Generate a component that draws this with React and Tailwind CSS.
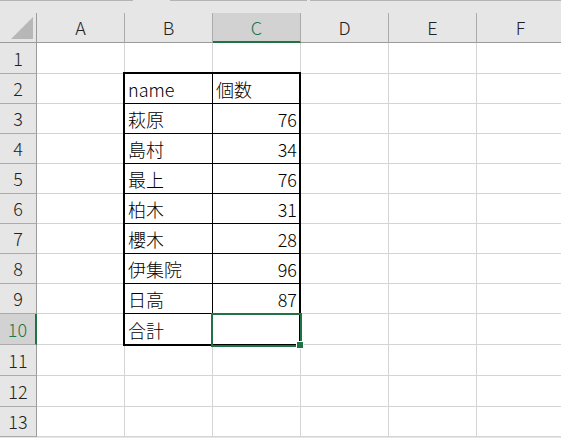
import React from 'react';

const COLS = ['A', 'B', 'C', 'D', 'E', 'F'];
const ROWS = [1, 2, 3, 4, 5, 6, 7, 8, 9, 10, 11, 12, 13];

const DATA = [
  ['name', '個数'],
  ['萩原', '76'],
  ['島村', '34'],
  ['最上', '76'],
  ['柏木', '31'],
  ['櫻木', '28'],
  ['伊集院', '96'],
  ['日高', '87'],
  ['合計', ''],
];

// B2:C10 is drawn by the table block, so the plain grid skips those cells
const inTable = (r, c) => r >= 2 && r <= 10 && (c === 2 || c === 3);

function SheetTable() {
  return (
    <div className="relative z-10 col-start-3 col-span-2 row-start-3 row-span-9 -ml-[2px] -mt-[2px] w-[178px] h-[274px] self-start justify-self-start border-2 border-black bg-white flex flex-col">
      {DATA.map(([name, count], i) => {
        const first = i === 0;
        const last = i === DATA.length - 1;
        return (
          <div key={i} className={`flex h-[30px] ${last ? '' : 'border-b border-black'}`}>
            <div className="w-[88px] border-r border-black flex items-center pl-[3px] pt-[2px] text-[18px] font-light text-black">
              {name}
            </div>
            <div
              className={`relative flex-1 flex items-center pt-[2px] text-[18px] font-light text-black ${
                first ? 'justify-start pl-[3px]' : 'justify-end pr-[2px]'
              }`}
            >
              {count}
              {last && (
                <div className="absolute -left-[2px] -top-[1px] w-[91px] h-[34px] border-2 border-[#217346]">
                  <div className="absolute -right-[3px] -bottom-[3px] w-[6px] h-[6px] bg-[#217346] outline outline-1 outline-white" />
                </div>
              )}
            </div>
          </div>
        );
      })}
    </div>
  );
}

export default function App() {
  return (
    <div className="w-[561px] h-[438px] overflow-hidden bg-[#e6e6e6] font-['Noto_Sans_CJK_JP','Noto_Sans',sans-serif]">
      {/* bottom edge of the formula bar */}
      <div className="h-[13px] flex">
        <div className="w-[133px] border-t border-[#b4b4b4]" />
        <div className="w-[37px]" />
        <div className="w-[137px] border-t border-[#b4b4b4]" />
        <div className="w-[3px]" />
        <div className="flex-1 border-t border-[#b4b4b4]" />
      </div>

      <div className="grid grid-cols-[37px_repeat(6,88px)] grid-rows-[30px_31px_repeat(8,30px)_31px_31px_31px_30px]">
        <SheetTable />

        {/* corner */}
        <div className="relative bg-[#e6e6e6] border-r border-b border-[#9b9b9b]">
          <svg className="absolute left-0 top-0" width="36" height="29" viewBox="0 0 36 29">
            <polygon points="11,26 33,4 33,26" fill="#b7b7b7" />
          </svg>
        </div>

        {COLS.map((col) => {
          const active = col === 'C';
          return (
            <div
              key={col}
              className={`flex items-center justify-center text-[18px] font-light border-r border-r-[#ababab] ${
                active
                  ? 'bg-[#d2d2d2] text-[#217346] border-b-2 border-b-[#217346]'
                  : 'bg-[#e6e6e6] text-[#222] border-b border-b-[#9b9b9b]'
              }`}
            >
              {col}
            </div>
          );
        })}

        {ROWS.map((r) => {
          const active = r === 10;
          return (
            <React.Fragment key={r}>
              <div
                className={`flex items-center justify-center text-[18px] font-light border-b border-b-[#ababab] ${
                  active
                    ? 'bg-[#d2d2d2] text-[#217346] border-r-2 border-r-[#217346]'
                    : 'bg-[#e6e6e6] text-[#222] border-r border-r-[#9b9b9b]'
                }`}
              >
                {r}
              </div>
              {COLS.map((col, ci) =>
                inTable(r, ci + 1) ? null : (
                  <div key={col} className="bg-white border-r border-b border-[#d4d4d4]" />
                )
              )}
            </React.Fragment>
          );
        })}
      </div>
    </div>
  );
}
